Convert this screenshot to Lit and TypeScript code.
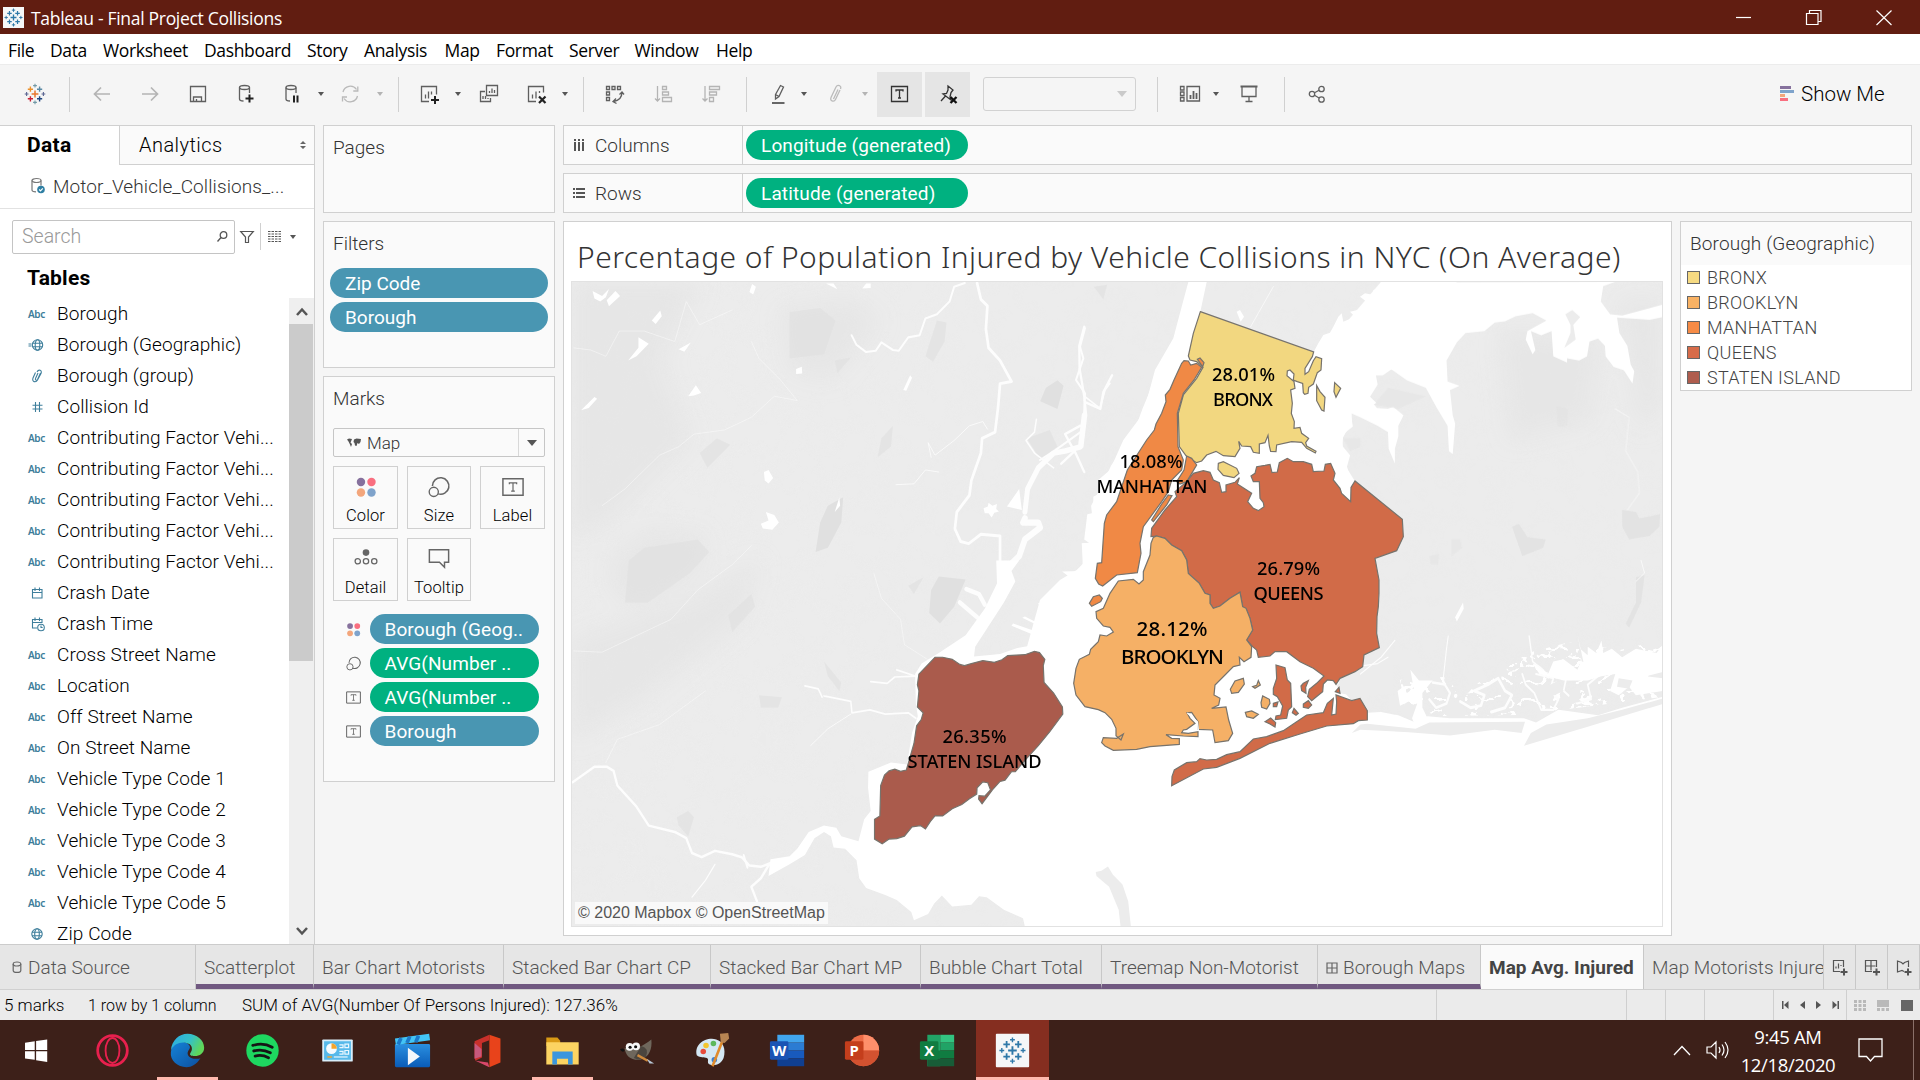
import { LitElement, html, svg, css } from "lit";
import { customElement } from "lit/decorators.js";

const spark = (c: string[]) => {
  // 9 crosses: centre, four inner, four outer
  const cross = (x: number, y: number, r: number, k: string, w: number) =>
    svg`<path d="M${x - r} ${y}H${x + r}M${x} ${y - r}V${y + r}" stroke=${k} stroke-width=${w}/>`;
  return svg`${cross(12, 12, 3.4, c[0], 1.5)}${cross(7.4, 7.2, 2.6, c[1], 1.4)}${cross(16.6, 7.2, 2.6, c[2], 1.4)}
    ${cross(7.4, 16.8, 2.6, c[3], 1.4)}${cross(16.6, 16.8, 2.6, c[4], 1.4)}${cross(12, 3.6, 1.9, c[5], 1.1)}
    ${cross(12, 20.4, 1.9, c[5], 1.1)}${cross(3.6, 12, 1.9, c[6], 1.1)}${cross(20.4, 12, 1.9, c[6], 1.1)}`;
};
const blueSpark = spark(Array(7).fill("#2f78a8"));

const toolIcons: Record<string, unknown> = {
  logo: spark(["#e8762c", "#eb912c", "#5b8aa5", "#c72035", "#1f457e", "#7199a6", "#5c6692"]),
  back: svg`<path d="M20 12H4.500M11 5.500 4.500 12l6.500 6.500" stroke="#b4b4b4" stroke-width="1.700"/>`,
  fwd: svg`<path d="M4 12h15.500M13 5.500 19.500 12 13 18.500" stroke="#b4b4b4" stroke-width="1.700"/>`,
  save: svg`<path d="M4.500 4.500h15v15h-15zM7.500 19v-4h8v4M10.500 19v-2"/>`,
  dbadd: svg`<ellipse cx="10.500" cy="5.500" rx="5" ry="2"/><path d="M5.500 5.500v11.500c0 1.500 2 2 4 2M15.500 5.500v5.500"/><path d="M15.500 12.500v8M11.500 16.500h8" stroke="#222" stroke-width="2"/>`,
  dbpause: svg`<ellipse cx="11" cy="5.500" rx="5" ry="2"/><path d="M6 5.500v11.500c0 1.500 2 2 4 2M16 5.500v5.500"/><path d="M14 13.500v7M17.500 13.500v7" stroke="#222" stroke-width="2"/>`,
  refresh: svg`<path d="M5 10a7.500 7.500 0 0 1 13.500-2.500M19.500 14a7.500 7.500 0 0 1-13.500 2.500M19.800 4.500v4.500h-4.500M4.500 19.500V15h4.500" stroke="#b9b9b9"/>`,
  sheet: svg`<path d="M11 19.500H3.500v-15h15v8M7.500 16.500v-4M10.500 16.500v-7M13.500 12.500v-3"/><path d="M17 14v8M13 18h8" stroke="#222" stroke-width="2"/>`,
  dup: svg`<path d="M9.500 3.500h11v10h-11zM8 9.500H3.500v10h10V16M12.500 11V9M15 11V6.500M17.500 11V8M6 17v-3M8.500 17v-3M11 17v-1"/>`,
  clear: svg`<path d="M11 19.500H3.500v-15h15v6M7.500 16.500v-4M11 16.500v-7M14.500 11v-2"/><path d="m14 14.500 6.500 6.500m0-6.500L14 21" stroke="#222" stroke-width="2.200"/>`,
  swap: svg`<path d="M3.500 4.500h3v3h-3zM9 4.500h3v3H9zM14.500 4.500h3v3h-3zM3.500 10h3v3h-3zM3.500 15.500h3v3h-3zM19 10c0 5-2 8.500-8.500 9.500M16.500 12.500l2.500-2.500 2 2.500M13 16.500l-3 3 3.500 2"/>`,
  asc: svg`<path d="M5.500 4v15M3 16.500 5.500 19 8 16.500M10.500 4.500h4v3h-4zM10.500 10h6v3h-6zM10.500 15.500h9v4h-9z" stroke="#b4b4b4"/>`,
  desc: svg`<path d="M5 4v15M2.500 16.500 5 19l2.500-2.500M9.500 4.500h10v3h-10zM9.500 10h7v3h-7zM9.500 15.500h4v4h-4z" stroke="#b4b4b4"/>`,
  pen: svg`<path d="M9.500 12.500 14.500 3.500l3 1.500-4.500 9.500-3.500 2.500zM9.500 12.500l3.500 2"/><path d="M6 21h12.500" stroke="#666" stroke-width="2"/>`,
  clip: svg`<path d="M16 8 11.500 17.500c-1.500 3-6 1.500-4.500-2L12 5c1.500-3 6-1.500 4.500 2M14 7.500l-4.500 9.500" stroke="#bbb"/>`,
  label: svg`<path d="M3.500 4.500h16v15h-16z" stroke="#333" stroke-width="1.300"/><path d="M8 9.500V8h7v1.500M11.500 8v8M10 16h3" stroke="#333"/>`,
  pin: svg`<path d="M12 4 17 8l-2 2.500-1 4.500 1 3-8-6 3.500-.500L12 8zM9.500 14 5 19" stroke="#333"/><path d="m14.500 15 6 6m0-6-6 6" stroke="#111" stroke-width="2.300"/>`,
  fit: svg`<path d="M2.500 4.500h3.500v3.500H2.500zM2.500 10h3.500v3.500H2.500zM2.500 15.500h3.500v3.500H2.500zM9 4.500h12.500v14.500H9z"/><path d="M12.500 17v-4M15.500 17V9M18.500 17v-6" stroke-width="1.800"/>`,
  present: svg`<path d="M3.500 4.500h17" stroke-width="2"/><path d="M5 5v9.500h14V5M12 14.500v5M8.500 19.500h7"/>`,
  share: svg`<circle cx="7" cy="12" r="2.700"/><circle cx="16.500" cy="7" r="2.700"/><circle cx="16.500" cy="17.500" r="2.700"/><path d="m9.500 10.800 4.600-2.500M9.500 13.300l4.600 2.700"/>`,
};

type Tool = { k: string; gap: number; off?: boolean };
const t = (k: string, gap: number, off = false): Tool => ({ k, gap, off });
const tools: Tool[] = [
  t("logo", 22.5), t("sep", 22.5), t("back", 20), t("fwd", 24), t("save", 24), t("dbadd", 24), t("dbpause", 22),
  t("caret", 13), t("refresh", 13), t("caret", 14, true), t("sep", 14), t("sheet", 19), t("caret", 12),
  t("dup", 15), t("clear", 24), t("caret", 12), t("sep", 14), t("swap", 19), t("asc", 25), t("desc", 24),
  t("sep", 22), t("pen", 19), t("caret", 10), t("clip", 16), t("caret", 13, true), t("label", 8), t("pin", 3),
  t("combo", 13), t("sep", 21), t("fit", 20), t("caret", 10), t("present", 17), t("sep", 23), t("share", 20),
];

const fieldIcons: Record<string, unknown> = {
  globe: svg`<circle cx="8" cy="8" r="5.200"/><ellipse cx="8" cy="8" rx="2.300" ry="5.200"/><path d="M3 6.300h10M3 9.700h10"/>`,
  geo: svg`<g transform="translate(.5 0)"><circle cx="8" cy="8" r="5.200"/><ellipse cx="8" cy="8" rx="2.300" ry="5.200"/><path d="M3 6.300h10M3 9.700h10M-1 7h3M-1 9h3"/></g>`,
  clip: svg`<path d="M11.500 5 8.500 11.500c-1 2-2.500 0-2-1L9 5M6.500 4.500 4 10c-1.500 4 3 5 4.500 2l3.500-6.500c1.500-3.500-2.500-4.500-4-1.500"/>`,
  num: svg`<path d="M6.500 3v10M10.500 3v10M3.500 6.200h10M3.500 10h10"/>`,
  date: svg`<path d="M3.500 4.500h9.500v8.500H3.500zM3.500 7.500H13M6 2.500V6M10.500 2.500V6"/>`,
  time: svg`<path d="M8 12H3.500V3.500H13V7M3.500 6.500H13M6 1.500V5M10.500 1.500V5"/><circle cx="12" cy="11.500" r="3.300"/><path d="M12 9.500v2h1.700"/>`,
};
const fields: [string, string][] = [
  ["abc", "Borough"], ["geo", "Borough (Geographic)"], ["clip", "Borough (group)"], ["num", "Collision Id"],
  ["abc", "Contributing Factor Vehi..."], ["abc", "Contributing Factor Vehi..."], ["abc", "Contributing Factor Vehi..."],
  ["abc", "Contributing Factor Vehi..."], ["abc", "Contributing Factor Vehi..."],
  ["date", "Crash Date"], ["time", "Crash Time"], ["abc", "Cross Street Name"], ["abc", "Location"],
  ["abc", "Off Street Name"], ["abc", "On Street Name"], ["abc", "Vehicle Type Code 1"], ["abc", "Vehicle Type Code 2"],
  ["abc", "Vehicle Type Code 3"], ["abc", "Vehicle Type Code 4"], ["abc", "Vehicle Type Code 5"], ["globe", "Zip Code"],
];

const markIcons: Record<string, unknown> = {
  color: svg`<g stroke="none"><circle cx="6.500" cy="6.500" r="4.600" fill="#86719d"/><circle cx="18" cy="6.500" r="4.600" fill="#f96f80"/><circle cx="6.500" cy="18" r="4.600" fill="#f3a67c"/><circle cx="18" cy="18" r="4.600" fill="#7fa3cb"/></g>`,
  size: svg`<path d="M4.800 11A9 9 0 1 1 11 19.500" stroke-width="1.700"/><circle cx="6.300" cy="17.300" r="5" stroke-width="1.500"/>`,
  label: svg`<path d="M1 3h22v18H1z" stroke-width="1.600"/><path d="M8 9V7.500h8V9M12 7.500v9M10 16.500h4" stroke-width="1.300"/>`,
  detail: svg`<circle cx="12" cy="5" r="3.600" fill="#666" stroke="none"/><circle cx="3" cy="14.500" r="2.900"/><circle cx="12" cy="14.500" r="2.900"/><circle cx="21" cy="14.500" r="2.900"/>`,
  tip: svg`<path d="M1.500 2h21v13.500H18V21l-5.500-5.500h-11z" stroke-width="1.600"/>`,
};

const sheets: { n: string; cls: string; icon?: string }[] = [
  { n: "Scatterplot", cls: "u w1" }, { n: "Bar Chart Motorists", cls: "u w2" }, { n: "Stacked Bar Chart CP", cls: "u w3" },
  { n: "Stacked Bar Chart MP", cls: "u w4" }, { n: "Bubble Chart Total", cls: "u w5" }, { n: "Treemap Non-Motorist", cls: "u w6" },
  { n: "Borough Maps", cls: "u w7", icon: "grid" }, { n: "Map Avg. Injured", cls: "on w8" }, { n: "Map Motorists Injure", cls: "w9" },
];

const legend: [string, string][] = [
  ["BRONX", "#f6da82"], ["BROOKLYN", "#f9b264"], ["MANHATTAN", "#f68b46"], ["QUEENS", "#d76c4a"], ["STATEN ISLAND", "#af5d4e"],
];

const taskIcons: unknown[] = [
  svg`<path fill="#fff" d="M6.500 11.500 17 10v9.500H6.500zM18.500 9.800 30.500 8v11.500h-12zM6.500 20.800H17V30L6.500 28.600zM18.500 20.800h12V32.500l-12-2z"/>`,
  svg`<g fill="none" stroke="#e8204e"><ellipse cx="20" cy="20" rx="16" ry="16" stroke-width="3"/><ellipse cx="20" cy="20" rx="7.500" ry="13.500" stroke-width="2"/></g>`,
  svg`<defs><linearGradient id="e1" x1="0" y1="0" x2="1" y2="1"><stop offset="0" stop-color="#1583d8"/><stop offset="1" stop-color="#0d4f9e"/></linearGradient><linearGradient id="e2" x1="0" y1="0" x2="1" y2=".4"><stop offset="0" stop-color="#2ba9e6"/><stop offset=".6" stop-color="#35c1c6"/><stop offset="1" stop-color="#5fd65a"/></linearGradient></defs>
    <path fill="url(#e1)" d="M2 22C3 12 12 8 19 12c5 3 4 6 2 8-3 5 2 9 8 9 3 0 4 0 5-1-4 7-10 10-15 10C9 38 1 31 2 22z"/><path fill="url(#e2)" d="M2 20C3 9 11 2 20 2c10 0 18 7 18 15 0 6-5 9-10 9-4 0-6-1-5-3 3-4 2-8-1-10C15 9 5 12 2 20z"/>`,
  svg`<circle cx="20" cy="20" r="17.500" fill="#1ed760"/><path d="M9.500 14.500q11.500-3.500 21 2M10.500 20.500q9.500-2.500 18 2M12 26q7.500-2 14.500 1.800" fill="none" stroke="#151515" stroke-width="3" stroke-linecap="round"/>`,
  svg`<rect x="3.500" y="8" width="33" height="24" rx="1" fill="#d9eefa"/><rect x="5.500" y="10" width="29" height="20" fill="#57b9ea"/><circle cx="13.500" cy="18" r="5.800" fill="#f6fbff"/><path d="M13.500 18v-5.800a5.800 5.800 0 0 1 5.800 5.800z" fill="#f6a52c"/><path d="M22 14h4v3h-4M28 13h4v4h-4zM22 21h4v3h-4M28 20h4v4h-4z" fill="none" stroke="#eaf7ff" stroke-width="1.300"/><path d="M9 27h5" stroke="#f6a52c" stroke-width="1.500"/><path d="M16 27h15" stroke="#d5effc" stroke-width="1.500"/>`,
  svg`<defs><linearGradient id="mv" x1="0" y1="0" x2="0" y2="1"><stop offset="0" stop-color="#2a8fe0"/><stop offset="1" stop-color="#0a5cb8"/></linearGradient></defs><rect x="1" y="13" width="38" height="25" rx="1.500" fill="url(#mv)"/><path d="M1 7 38 2l1 7L2 14z" fill="#43c4f5"/><path d="m7.500 6.500-3 7M17 5l-3 7M26.500 4l-3 7" stroke="#1b78c9" stroke-width="4"/><path d="m15 17 13 9.500L15 36z" fill="#f4f7fa"/>`,
  svg`<path d="M22 3l12 4v26l-12 5z" fill="#e8431b"/><path d="M6 10 22 3v6l-8 3v15.500L7 31l-1-3z" fill="#c9302b"/><path d="M7 31l13.500 2 1.500 5z" fill="#d9486b"/><path d="M6 12v17l7.500-2.500v-8z" fill="#c8587c"/>`,
  svg`<path d="M2.500 6h12l3 3.500V15h-15z" fill="#d99a15"/><path d="M2.500 11h35v24h-35z" fill="#fcd462"/><path d="M9 21h22v14h-5v-6h-12v6H9z" fill="#3b96dd"/>`,
  svg`<path d="M6 17c5 2 14 3 29-9 1 10-2 19-12 22-10 1-16-4-17-13z" fill="#6f675c"/><path d="M24 15q9 2 5 12-5 5-13 1z" fill="#4b453e"/><circle cx="11.500" cy="16" r="4.200" fill="#f7f7f7"/><circle cx="18.500" cy="15.500" r="4.200" fill="#f7f7f7"/><circle cx="12" cy="16.500" r="1.700" fill="#111"/><circle cx="18" cy="16" r="1.700" fill="#111"/><path d="M1 19q4-3 5 1-2 3-5-1z" fill="#111"/><path d="m20 25 11 6" stroke="#d08a3c" stroke-width="2.500"/><path d="m30 29 8 5-5 0z" fill="#b9c7d6"/>`,
  svg`<path d="M3 25C0 14 12 5 24 8c7 2 11 10 8 20-3 7-10 9-15 7-4-2 0-5-3-7-3-1-7 0-11-3z" fill="#d5e8f4"/><circle cx="10" cy="21" r="3" fill="#e74c3c"/><circle cx="13" cy="14.500" r="3" fill="#f3c52f"/><circle cx="21" cy="12.500" r="3" fill="#5cb85c"/><circle cx="22" cy="30" r="3" fill="#3d7fd0"/><path d="M20 37 31 9" stroke="#e08b2d" stroke-width="2.800"/><path d="m29 11-1-9 9-1 1 6-5 5z" fill="#b78452"/>`,
  svg`<rect x="9" y="3" width="29" height="8.500" fill="#41a5ee"/><rect x="9" y="11.500" width="29" height="8.500" fill="#2b7cd3"/><rect x="9" y="20" width="29" height="8.500" fill="#185abd"/><rect x="9" y="28.500" width="29" height="8.500" fill="#103f91"/><rect x="1" y="10" width="20" height="20" rx="1.500" fill="#1a54b4"/><text x="11" y="26" class="off">W</text>`,
  svg`<circle cx="21" cy="20" r="17" fill="#ed6c47"/><path d="M21 3a17 17 0 0 1 17 17H21z" fill="#ff8f6b"/><path d="M4 20h34a17 17 0 0 1-34 0z" fill="#d35230"/><rect x="1" y="10" width="20" height="20" rx="1.500" fill="#c43e1c"/><text x="11" y="26" class="off">P</text>`,
  svg`<rect x="9" y="3" width="14" height="34" fill="#21a366"/><rect x="23" y="3" width="15" height="8.500" fill="#33c481"/><rect x="23" y="11.500" width="15" height="8.500" fill="#21a366"/><rect x="9" y="20" width="29" height="8.500" fill="#107c41"/><rect x="9" y="28.500" width="29" height="8.500" fill="#185c37"/><rect x="1" y="10" width="20" height="20" rx="1.500" fill="#107c41"/><text x="11" y="26" class="off">X</text>`,
  svg`<rect x="2" y="2" width="36" height="36" rx="1" fill="#f5f6f7"/><g fill="none" transform="translate(3.500 3.500) scale(1.370)">${blueSpark}</g>`,
];

@customElement("borough-map")
class BoroughMap extends LitElement {
  static styles = css`
    :host { display: block; }
    svg { display: block; width: 100%; height: 100%; }
    .b { stroke: #77736c; stroke-width: 1.2; vector-effect: non-scaling-stroke; }
    .w { fill: #fff; }
    .l { fill: #ececec; }
    .r { fill: none; stroke: #fdfdfd; stroke-linejoin: round; stroke-linecap: round; }
    .h { fill: #e2e2e2; opacity: .6; }
    .d { fill: #e0e0e0; }
    .t { font-family: "Noto Sans", "Open Sans", sans-serif; font-weight: 500; font-size: 18.300px; text-anchor: middle; fill: #000; }
    .big { font-size: 20.500px; }
  `;
  render() {
    const bx = "#f2d780", bk = "#f5b066", mh = "#f08945", qn = "#d16b48", si = "#aa5b4c";
    const p = (f: string, pts: string) => svg`<polygon class="b" fill=${f} points=${pts}/>`;
    const w = (pts: string) => svg`<polygon class="w" points=${pts}/>`;
    const r = (width: number, pts: string) => svg`<polyline class="r" stroke-width=${width} points=${pts}/>`;
    const d = (pts: string) => svg`<polygon class="d" points=${pts}/>`;
    const lab = (x: number, y: number, len: number, s: string, c = "t") =>
      svg`<text class=${c} x=${x} y=${y} textLength=${len}>${s}</text>`;
    return html`<svg viewBox="572 282 1090 644" preserveAspectRatio="none">
      <defs>
        <filter id="n" x="0" y="0" width="1" height="1">
          <feTurbulence type="fractalNoise" baseFrequency=".045" numOctaves="4" seed="7"/>
          <feColorMatrix values="0 0 0 0 .84  0 0 0 0 .84  0 0 0 0 .84  3.2 0 0 0 -1.45"/>
        </filter>
        <filter id="k" x="0" y="0" width="1" height="1">
          <feTurbulence type="turbulence" baseFrequency=".045 .06" numOctaves="3" seed="12"/>
          <feColorMatrix values="0 0 0 0 1  0 0 0 0 1  0 0 0 0 1  -28 0 0 0 4.200"/>
        </filter>
        <filter id="s" x="-.2" y="-.2" width="1.4" height="1.4"><feGaussianBlur stdDeviation="11"/></filter>
        <linearGradient id="f"><stop offset="0" stop-color="#fff"/><stop offset=".3" stop-color="#fff" stop-opacity=".7"/><stop offset=".5" stop-color="#fff" stop-opacity=".12"/><stop offset=".7" stop-color="#fff" stop-opacity=".15"/><stop offset="1" stop-color="#fff" stop-opacity=".4"/></linearGradient>
        <mask id="m"><rect x="572" y="282" width="1090" height="644" fill="url(#f)"/></mask>
        <clipPath id="marsh"><polygon points="1400,680 1425,668 1450,680 1460,700 1490,672 1520,655 1570,642 1620,650 1662,640 1662,697 1600,705 1520,715 1440,716 1405,706"/></clipPath>
      </defs>
      <rect class="l" x="572" y="282" width="1090" height="644"/>
      <g mask="url(#m)"><rect x="572" y="282" width="1090" height="644" filter="url(#n)" opacity=".6"/></g>
      <g filter="url(#s)">
        <polygon class="h" points="572,282 700,282 660,360 690,440 610,520 572,540"/>
        <polygon class="h" points="610,560 650,530 705,535 700,570 640,605 612,590"/>
        <polygon class="h" points="572,640 690,600 760,560 740,620 640,700 572,740"/>
        <polygon class="h" points="780,310 850,300 880,320 830,380 790,370"/>
        <polygon class="h" points="1500,330 1600,340 1590,420 1510,440"/>
        <polygon class="h" points="1620,300 1662,300 1662,400 1640,430"/>
      </g>
      <g transform="translate(560 270) scale(.38265 .42092)">
        ${d("990,728 1060,735 1030,800 993,840 965,815 970,760")}${d("1300,262 1316,275 1300,330 1255,312 1270,280")}
        ${d("700,560 740,540 735,600 700,660 668,670 680,600")}
        <g opacity=".6">${d("985,120 1010,125 1005,170 975,218 955,205")}${d("365,435 410,400 445,415 385,470")}${d("718,215 760,208 725,245")}${d("840,400 870,370 865,420 830,445")}
        ${d("600,100 680,90 720,120 690,200 600,210")}${d("305,1300 335,1285 350,1300 335,1345 310,1320")}${d("910,750 950,730 925,770")}
        ${d("1395,40 1430,35 1420,70")}${d("1220,400 1280,380 1300,420 1255,450")}${d("520,1010 580,1015 570,1040 525,1040")}${d("690,930 735,980 730,1000 700,965")}
        ${d("180,690 220,660 360,640 390,670 340,720 230,790 170,790")}${d("440,820 500,770 510,800 450,860")}</g>
        ${w("85,50 110,62 128,45 120,65 105,75 90,68")}${w("122,72 145,50 157,62 128,86")}${w("240,120 262,96 266,110 250,128")}${w("178,215 205,185 205,160 232,175 200,205")}
        ${w("310,188 342,172 325,194")}${w("335,300 355,274 369,292 350,298")}${w("55,333 90,302 97,306 75,328")}${w("495,52 502,33 512,40 505,58")}
        ${w("533,480 545,475 557,494 545,507 535,500")}${w("525,603 545,595 538,575 560,582 572,600 555,617 530,614")}${w("617,235 632,230 633,246 617,247")}${w("718,575 730,540 732,560")}
        ${w("897,285 915,250 920,256 905,287")}${w("695,32 715,32 725,46")}${w("790,44 800,32 812,32 812,43")}${w("1168,562 1200,520 1207,570")}
        ${w("1107,566 1118,562 1120,553 1130,560 1142,556 1140,568 1147,574 1135,577 1128,588 1120,578 1110,578")}
        ${r(5, "1058,31 1030,40 1018,75 985,105 955,115 940,155 910,160 885,192 870,190 840,172 825,192 800,195 775,178 762,155")}
        ${r(7, "1090,31 1100,70 1117,85 1113,140 1120,185 1150,215 1180,265 1150,270 1145,325 1137,385 1103,400 1100,435 1075,500 1070,535 1037,575 1032,615 1047,645 1068,650 1100,628 1150,632 1150,690")}
        ${r(6, "1370,135 1357,180 1358,235 1370,300 1375,345 1365,420")}${r(6, "1375,315 1412,330 1420,290 1443,250")}
        ${r(13, "1370,345 1360,420 1320,430 1290,435 1250,470 1222,520 1215,575")}${r(15, "1215,590 1210,600 1250,600 1255,612 1215,640 1200,680 1165,710")}
        ${r(4, "1245,355 1240,385 1218,405 1240,435 1290,470")}${r(6, "1310,460 1345,430 1370,480 1350,440 1320,390 1360,370")}
        ${r(2, "970,445 962,410 980,440 1030,405 1070,370 1105,360 1117,378")}${r(2, "878,510 925,508 955,475 990,480")}
        ${r(6, "33,1217 90,1180 122,1180 140,1190 150,1225 200,1275 232,1320 300,1335 330,1350 345,1385 370,1395 405,1380 450,1388 475,1395 495,1415 525,1418 548,1410")}
        ${r(6, "548,1410 525,1445 500,1465 515,1500")}${r(5, "480,1390 490,1420")}${r(3, "405,1412 380,1450 345,1490")}
        ${r(4, "640,988 675,995 685,1015")}${r(4, "690,1012 735,1020 760,1025 763,1052 810,1045 850,1055 910,1052 930,1065")}
        ${r(4, "812,978 855,982 875,967 930,965 880,950")}${r(2, "760,1055 700,1090 655,1130")}
        <g opacity=".6">${r(2, "36,185 80,190 120,205 155,145 220,145 300,170 330,75 365,130 450,95")}${r(2, "110,560 170,520 260,440 310,420 350,390 430,380 500,350 560,300 620,310 575,260 520,210 500,170")}
        ${r(2, "36,905 110,908 220,860 290,830 360,760 450,700 500,655")}${r(2, "820,720 840,780 890,830 900,890 960,925")}${r(2, "120,1170 150,1115 260,1080 380,1000")}</g>
        ${r(11, "1062,758 1095,770 1110,795")}${r(11, "1045,790 1090,825")}
        ${w("1140,690 1200,690 1180,715 1190,740 1160,790 1110,860 1085,895 1082,918 1150,912 1195,898 1225,893 1232,865 1180,845 1184,840 1235,856 1270,868 1262,850 1208,826 1215,823 1280,853 1280,838 1248,822 1270,820 1248,790 1262,798 1285,795 1278,762 1315,775 1300,752 1345,738 1312,716 1366,715 1365,650 1385,650 1370,640 1378,580 1390,578 1388,560 1420,505 1440,465 1500,385 1522,330 1568,230 1568,1560 1215,1560 1210,1540 1160,1520 1115,1490 1095,1488 1075,1508 1025,1512 998,1486 978,1505 962,1530 925,1545 918,1525 880,1497 850,1485 800,1468 782,1445 775,1402 745,1375 715,1372 708,1345 690,1335 665,1350 640,1390 600,1412 545,1440 550,1400 600,1393 620,1375 650,1335 690,1320 722,1325 735,1345 780,1357 795,1305 812,1285 805,1230 806,1192 865,1170 907,1175 920,1100 935,1060 930,1030 928,960 945,935 990,910 1060,868 1110,805 1142,745")}
        <polygon class="l" points="1400,1430 1415,1427 1432,1417 1445,1437 1470,1460 1485,1500 1492,1560 1465,1560 1460,1520 1435,1465 1402,1440"/>
      </g>
      <g transform="translate(1040 280) scale(.33333)">
        ${w("445,6 500,6 481,95 470,200 560,210 821,216 835,190 850,165 870,158 880,140 895,110 905,100 910,125 945,110 930,95 975,85 980,65 960,50 975,40 1000,45 1000,30 1020,25 1022,6 1250,6 1180,318 1110,285 1052,268 1030,283 1000,285 1010,310 985,345 1010,370 935,398 935,425 905,480 915,540 930,590 945,603 1087,718 1000,835 1010,1100 972,1125 968,1160 900,1195 895,1215 935,1262 960,1255 985,1290 982,1325 1200,1340 1200,1500 -150,1500 0,960 60,900 110,870 130,850 125,790 150,788 145,710 160,700 160,650 180,640 175,600 210,570 250,480 310,400 345,270 400,175 425,80")}
        ${r(6, "135,145 120,200 130,235 108,300 135,340 130,450 40,515 0,540")}${r(5, "135,350 180,385 195,330 210,310")}${r(2, "700,20 632,140")}
        ${w("590,95 600,90 612,110 602,125")}
        <polygon class="l" points="850,215 862,212 860,222 848,224"/><polygon class="l" points="880,180 895,185 890,200"/>
        <polygon class="l" points="925,1130 968,1135 1000,1125 1060,1090 1060,1240 960,1250 900,1240 890,1215 930,1190"/>
      </g>
      <g transform="translate(1140 270) scale(.34439 .42092)">
        ${w("698,30 1380,28 1345,38 1338,75 1365,105 1400,108 1460,95 1518,82 1518,112 1480,118 1385,113 1392,150 1415,180 1425,225 1435,240 1430,270 1405,238 1375,230 1352,205 1350,180 1330,163 1305,170 1298,205 1275,215 1240,210 1240,220 1200,205 1195,145 1165,155 1135,145 1148,190 1140,200 1120,165 1125,145 1180,120 1140,102 1090,110 1060,122 1030,125 1000,145 945,150 920,172 890,215 893,265 928,275 900,285 908,345 915,365 908,437 897,430 893,370 860,325 830,280 775,262 730,236 705,250 685,250 690,272 665,305 688,328 720,330 735,325 765,345 750,370 750,395 740,425 740,460 722,425 720,385 690,370 640,350 612,340 618,372 590,390 588,418 610,440 600,470 625,503 612,550 450,470 520,200")}
        <polygon class="l" points="1235,105 1255,95 1278,112 1258,130 1265,165 1232,185 1250,150 1250,130"/>
        <g opacity=".7">${d("1080,610 1100,603 1125,635 1178,640 1170,660 1110,680")}${d("1400,570 1440,575 1450,590 1510,580 1508,610 1480,632 1420,640 1400,610")}${d("1440,730 1465,725 1455,790 1420,850 1410,840 1440,790")}</g>
        <g opacity=".4">${d("1210,325 1242,330 1240,370 1213,372")}${d("905,640 930,640 935,660 905,680")}${d("680,320 720,280 830,300 750,330")}${d("590,400 640,400 640,420 610,430")}${d("840,680 868,675 865,700 845,700")}</g>
        ${w("915,825 938,790 940,805 920,835")}
        ${w("660,1052 700,1050 750,1058 800,1075 835,1060 900,1065 1115,1065 1150,1075 1215,1045 1330,1058 1400,1040 1518,1014 1518,1560 0,1560 0,1200 600,1080")}
        <polygon class="l" points="660,1078 800,1090 840,1075 1118,1073 1108,1100 1030,1092 900,1106 780,1098 640,1092 615,1100 640,1080"/>
        <polygon class="l" points="1115,1130 1135,1100 1180,1080 1300,1065 1400,1045 1518,1018 1518,1031 1300,1085"/>
      </g>
      <g clip-path="url(#marsh)"><rect x="1395" y="630" width="267" height="90" filter="url(#k)"/></g>
      <g transform="translate(1140 270) scale(.34439 .42092)">
        ${w("748,1000 765,990 775,1005 795,995 785,950 810,975 850,975 840,985 820,1005 820,1040 835,1065 800,1085 790,1065 805,1030 780,1025 755,1035")}
        ${r(6, "850,980 885,985 900,1005 890,1030 860,1040 840,1020")}${r(7, "930,1025 960,1040 990,1035 1000,1010 970,1000 1010,985 1040,970 1060,1000 1080,1010 1060,1040 1020,1050")}
        ${r(5, "1110,960 1120,985 1145,1005 1165,1045 1200,1045 1215,1020 1190,1000 1200,970 1150,960")}${r(5, "1240,960 1230,1000 1270,1030 1310,1020 1300,985 1330,965")}
        ${w("1140,935 1160,940 1185,960 1200,930 1230,925 1270,950 1280,930 1330,935 1370,900 1400,920 1440,900 1500,910 1518,890 1518,955 1470,965 1518,970 1518,1000 1440,1010 1420,990 1390,1010 1365,1000 1380,960 1340,965 1300,975 1230,975 1160,960")}
        ${w("1270,865 1278,900 1300,915 1300,895 1325,910 1340,880 1345,910 1370,900 1350,935 1290,940")}
        ${r(3, "640,960 700,920 740,880")}${r(3, "650,940 690,935 720,920")}${r(3, "880,975 890,900 895,870")}${r(4, "1130,870 1140,930 1170,950")}${r(2, "1455,690 1465,720 1440,740")}
        <g opacity=".5">${r(3, "1380,330 1420,350 1410,430 1445,480 1450,530 1415,570")}</g>
        <g class="l"><polygon points="1180,990 1215,975 1230,1000 1190,1015"/><polygon points="1250,1000 1280,990 1275,1025 1240,1035"/><polygon points="1390,970 1430,975 1420,995 1385,990"/></g>
      </g>
      <g transform="translate(560 270) scale(.38265 .42092)">
        ${p(si, "938,960 980,920 1000,920 1025,925 1045,937 1057,940 1075,935 1105,928 1135,932 1155,926 1170,916 1215,914 1240,906 1253,909 1267,925 1263,940 1265,980 1290,1005 1313,1038 1314,1055 1280,1097 1250,1130 1215,1165 1190,1192 1180,1192 1163,1212 1150,1215 1130,1235 1103,1268 1094,1257 1095,1249 1110,1250 1125,1235 1118,1218 1105,1216 1090,1230 1089,1245 1070,1256 1050,1270 1025,1280 1000,1297 980,1297 968,1310 955,1328 942,1320 920,1323 900,1345 880,1351 860,1352 842,1363 822,1352 822,1305 836,1297 838,1225 848,1200 860,1190 875,1186 890,1191 905,1188 917,1150 925,1125 932,1083 944,1068 949,1052 934,1038 938,1000 934,985")}
      </g>
      <g transform="translate(1040 280) scale(.33333)">
        ${p(qn, "333,770 335,745 375,690 410,650 405,635 440,605 460,580 490,572 510,577 520,600 538,608 545,637 558,635 558,615 585,607 598,593 592,612 635,640 623,665 640,685 655,692 672,680 670,668 660,655 658,605 640,605 633,588 645,580 650,560 675,556 690,553 696,578 712,576 718,548 742,535 760,545 790,545 815,553 820,575 852,573 856,553 872,550 885,580 880,600 900,625 905,640 932,665 933,622 945,603 1087,718 1090,770 1070,812 1005,835 1017,900 1017,940 1015,980 1011,1010 1010,1060 1018,1103 972,1125 968,1160 945,1175 900,1195 888,1213 880,1202 862,1200 850,1212 848,1235 832,1248 815,1262 803,1250 808,1228 830,1210 852,1188 820,1165 780,1145 740,1115 705,1115 690,1128 655,1132 650,1110 638,1100 620,1080 638,1050 630,1015 618,985 608,980 600,937 570,955 540,978 520,985 510,970 510,945 495,940 478,910 445,880 440,840 425,812 395,795 375,775 350,768")}
        ${p(bk, "350,768 375,775 395,795 425,812 440,840 445,880 478,910 495,940 510,945 510,970 520,985 540,978 570,955 600,937 608,980 618,985 630,1015 638,1050 620,1080 635,1100 633,1132 612,1145 598,1132 600,1155 580,1160 555,1185 525,1215 522,1245 540,1255 536,1275 515,1285 558,1281 566,1320 578,1360 565,1382 525,1388 518,1350 475,1348 474,1325 455,1297 441,1298 450,1315 465,1330 440,1348 430,1350 425,1358 445,1360 474,1355 474,1370 430,1368 378,1364 395,1375 418,1376 418,1393 330,1400 290,1408 220,1411 195,1398 185,1388 190,1373 230,1375 250,1362 243,1380 228,1367 228,1345 215,1318 195,1298 175,1289 135,1280 108,1245 101,1210 108,1165 118,1138 148,1123 152,1108 165,1095 175,1085 180,1065 200,1068 220,1056 210,1042 190,1038 170,1015 168,995 190,985 210,940 235,903 280,898 297,912 310,900 310,875 330,825 333,790 340,772")}
        ${p(bx, "481,95 821,216 817,230 795,265 795,283 806,275 820,242 828,230 845,236 843,270 832,278 820,312 806,322 804,340 794,343 790,338 788,310 772,305 760,300 762,282 750,270 742,273 741,287 762,305 765,325 752,330 757,370 754,400 763,425 762,445 780,442 785,460 806,475 797,488 800,498 828,514 826,519 800,505 785,487 755,485 710,495 708,515 692,514 688,498 684,466 675,488 658,492 658,520 640,517 632,500 605,498 596,484 600,505 585,530 550,527 528,514 500,525 485,543 470,548 440,530 418,500 415,400 430,345 470,295 489,262 470,245 450,240 445,228 460,160")}
        ${p(bx, "830,317 840,335 855,352 852,393 845,390 830,362")}${p(bx, "884,308 902,325 888,352 882,335")}${p(bx, "535,550 550,545 590,565 597,580 582,593 550,586 534,568")}
        ${p(mh, "425,250 432,242 445,243 452,255 470,250 485,262 462,300 430,340 412,400 414,500 430,540 425,570 395,600 385,635 365,665 310,740 300,790 303,820 292,878 230,885 188,918 176,912 166,895 172,850 185,848 193,730 200,705 230,665 262,570 320,480 343,450 348,432 365,400 378,365 376,345 390,328 402,300")}
        ${p(mh, "472,238 480,234 492,248 488,260")}${p(mh, "440,528 455,535 470,555 440,605 420,612 410,605 432,570")}${p(mh, "385,645 396,647 380,675 340,725 335,720 365,672")}${p(mh, "148,970 160,950 178,945 187,955 182,965 155,979")}
        ${p(qn, "395,1517 396,1490 403,1470 440,1448 470,1445 480,1436 500,1440 530,1438 560,1424 600,1415 640,1377 680,1370 730,1352 770,1325 800,1305 850,1298 862,1270 880,1255 875,1305 888,1302 890,1265 888,1245 935,1262 960,1255 982,1292 982,1320 955,1322 940,1331 860,1338 780,1362 690,1390 600,1435 530,1462 490,1467")}
        ${p(qn, "708,1155 735,1163 742,1200 752,1210 755,1280 745,1290 740,1315 706,1319 708,1308 722,1305 728,1278 712,1250 700,1243 700,1225 710,1195")}
        ${p(qn, "675,1325 692,1314 707,1328 705,1341 690,1332")}${p(qn, "790,1210 805,1202 797,1222 798,1240 785,1232 783,1218")}${p(qn, "790,1272 805,1262 815,1275 805,1285 790,1282")}${p(qn, "762,1285 775,1300 768,1306 757,1298")}${p(qn, "700,1270 714,1266 710,1280 700,1280")}${p(qn, "886,1235 897,1222 900,1240")}
        ${p(bk, "571,1228 585,1203 610,1195 613,1212 595,1237 575,1240")}${p(bk, "638,1220 650,1216 655,1202 661,1215 645,1225")}${p(bk, "663,1268 668,1248 688,1258 690,1270 680,1287 665,1282")}${p(bk, "616,1297 635,1293 655,1303 640,1315 620,1310")}
        ${r(4, "443,1300 472,1325 475,1350")}
      </g>
      ${lab(1243.500, 380.500, 63, "28.01%")}${lab(1243, 405.500, 60, "BRONX")}
      ${lab(1151, 467.500, 63, "18.08%")}${lab(1152, 492.500, 111, "MANHATTAN")}
      ${lab(1288.500, 574.500, 63, "26.79%")}${lab(1288.500, 599.500, 70, "QUEENS")}
      ${lab(1172, 635.500, 71, "28.12%", "t big")}${lab(1172.500, 663.500, 103, "BROOKLYN", "t big")}
      ${lab(974.500, 742.500, 64, "26.35%")}${lab(974.500, 767.500, 134, "STATEN ISLAND")}
    </svg>`;
  }
}

@customElement("app-root")
class AppRoot extends LitElement {
  static styles = css`
    :host { display: flex; flex-direction: column; width: 1920px; height: 1080px; overflow: hidden; background: #f5f5f5; fill: none; stroke: none;
      font-family: Roboto, "Open Sans", sans-serif; font-weight: 300; font-size: 19px; color: #333; }
    * { box-sizing: border-box; }
    svg { display: block; flex: none; overflow: visible; }
    .seg { font-family: "Open Sans", "Noto Sans", sans-serif; font-weight: 400; }
    .title { height: 34px; background: #611d11; color: #fff; display: flex; align-items: center; padding-left: 3px; font-size: 17.500px; flex: none; }
    .title .ico { width: 21px; height: 21px; background: #f6f7f8; margin-right: 7px; }
    .title .name { flex: 1; letter-spacing: -.3px; padding-top: 1px; }
    .title .btns { display: flex; gap: 54px; padding-right: 28px; }
    .menu { height: 30px; background: #fff; color: #000; display: grid; align-items: center; padding: 2px 0 0 8px; font-size: 17.500px; letter-spacing: -.35px;
      grid-template-columns: 42px 53px 101px 103px 57px 80.500px 51.500px 73px 65.500px 81.500px auto; flex: none; }
    .tools { height: 61px; border-top: 1px solid #ececec; display: flex; align-items: center; padding-bottom: 2px; flex: none; }
    .tool { width: 24px; height: 24px; stroke: #5f5f5f; stroke-width: 1.300; flex: none; }
    .tool.act { width: 45px; height: 45px; background: #e5e5e5; display: flex; align-items: center; justify-content: center; }
    .caret { width: 8px; display: flex; justify-content: center; flex: none; }
    .caret i, .dn { border: 3.500px solid transparent; border-top: 4.500px solid #555; border-bottom: 0; }
    .caret.off i { border-top-color: #b4b4b4; }
    .sep { width: 1px; height: 35px; background: #d0d0d0; flex: none; }
    .sep.fs { height: 27px; margin-left: 6px; }
    .vw { margin-left: 7px; }
    .lc { margin-left: 8px; }
    .combo { width: 153px; height: 34px; border: 1px solid #d2d2d2; border-radius: 3px; display: flex; align-items: center; justify-content: flex-end; padding-right: 8px; flex: none; }
    .combo i { border: 5.500px solid transparent; border-top: 6px solid #cacaca; border-bottom: 0; }
    .show { margin-left: 451px; display: flex; align-items: center; gap: 7px; color: #000; font-size: 20.500px; white-space: nowrap; }
    .main { height: 819px; display: flex; flex: none; }
    .left { width: 315px; background: #fff; border-right: 1px solid #cfcfcf; border-top: 1px solid #d0d0d0; display: flex; flex-direction: column; }
    .ltabs { height: 39px; display: flex; font-size: 20px; color: #000; flex: none; }
    .ltabs b { width: 119px; padding-left: 27px; font-weight: 700; line-height: 38px; font-size: 21px; letter-spacing: .3px; }
    .ltabs .an { flex: 1; background: #fafafa; border-left: 1px solid #d0d0d0; border-bottom: 1px solid #d0d0d0; padding: 0 8px 0 19px; display: flex; align-items: center; justify-content: space-between; letter-spacing: .45px; }
    .ds { height: 44px; display: flex; align-items: center; padding: 0 0 1px 31px; gap: 8px; border-bottom: 1px solid #e2e2e2; flex: none; letter-spacing: .1px; }
    .find { height: 55px; display: flex; align-items: center; padding: 0 0 0 12px; flex: none; }
    .box { width: 223px; height: 34px; border: 1px solid #c4c4c4; border-radius: 2px; display: flex; align-items: center; justify-content: space-between; padding: 0 6px 1px 9px; color: #999; margin-right: 5px; font-size: 19.500px; }
    .tb { height: 34px; line-height: 29px; padding-left: 27px; font-weight: 700; font-size: 21px; letter-spacing: .2px; color: #000; flex: none; }
    .list { flex: 1; display: flex; min-height: 0; overflow: hidden; }
    .rows { flex: 1; letter-spacing: .08px; }
    .row { height: 31px; display: flex; align-items: center; color: #000; white-space: nowrap; }
    .row .fi { width: 57px; display: flex; justify-content: flex-end; padding-right: 12px; flex: none; }
    .row svg { width: 16px; height: 16px; stroke: #3f7f9c; stroke-width: 1.100; margin-right: .500px; }
    .row .abc { font: 600 10px "Noto Sans", sans-serif; color: #3d7d9a; letter-spacing: -.3px; }
    .sb { width: 25px; background: #efefef; display: flex; flex-direction: column; align-items: stretch; }
    .sb div { height: 26px; display: grid; place-items: center; }
    .sb .th { background: #cbcbcb; height: 337px; margin-right: 1px; }
    .sb .sp { flex: 1; }
    .mid { width: 232px; margin-left: 8px; display: flex; flex-direction: column; gap: 8px; }
    .card { background: #fafafa; border: 1px solid #d0d0d0; }
    .card h4 { margin: 0; font: inherit; padding: 9px 0 0 9px; height: 46px; line-height: 26px; }
    .pages { height: 88px; } .filters { height: 147px; } .marks { height: 406px; }
    .pill { height: 30px; border-radius: 15px; background: #4996b2; color: #fff; font-weight: 400; display: flex; align-items: center; padding: 0 0 0 15px; white-space: nowrap; }
    .pill.g { background: #00b180; }
    .filters .pill { margin: 0 6px 4px; }
    .sel { height: 29px; margin: 5px 9px 9px; border: 1px solid #c6c6c6; border-radius: 2px; display: flex; align-items: center; font-size: 17px; padding-left: 13px; gap: 6px; }
    .sel .m { flex: 1; }
    .sel .c { width: 26px; height: 27px; border-left: 1px solid #d8d8d8; display: grid; place-items: center; }
    .dn { border-width: 5px 5px 0; border-top-width: 6px; }
    .grid { display: grid; grid-template-columns: 65px 64px 65px; gap: 9px; padding-left: 9px; margin-bottom: 13px; }
    .mk { height: 63px; border: 1px solid #d0d0d0; display: flex; flex-direction: column; align-items: center; justify-content: space-between; padding: 9px 0 2px; color: #000; font-size: 16.500px; letter-spacing: .1px; line-height: 21px; }
    .mk svg { width: 22px; height: 22px; stroke: #666; stroke-width: 1.400; }
    .mrow { height: 30px; margin-bottom: 4px; display: flex; align-items: center; padding-left: 22px; gap: 8px; }
    .mrow svg { width: 15px; height: 15px; stroke: #666; stroke-width: 1.900; margin-right: .500px; }
    .mrow .pill { width: 169px; padding-left: 15px; letter-spacing: .1px; }
    .right { width: 1349px; margin-left: 8px; display: flex; flex-direction: column; gap: 8px; }
    .shelf { height: 40px; display: flex; flex: none; }
    .shelf .n { width: 179px; border-right: 1px solid #d0d0d0; display: flex; align-items: center; gap: 10px; padding-left: 9px; }
    .shelf .pill { width: 222px; margin: 4px 0 0 3px; letter-spacing: .15px; }
    .lower { display: flex; gap: 8px; align-items: flex-start; }
    .viz { width: 1109px; height: 715px; background: #fff; border: 1px solid #d0d0d0; padding: 0 7px; }
    .viz h1 { margin: 0; height: 59px; padding-left: 6px; font: 300 30px/70px "Noto Sans", "Open Sans", sans-serif; letter-spacing: .46px; color: #333; white-space: nowrap; }
    .map { width: 1092px; height: 646px; border: 1px solid #e2e2e2; display: grid; }
    .map > * { grid-area: 1 / 1; }
    .map borough-map { width: 1090px; height: 644px; }
    .cr { align-self: end; justify-self: start; margin: 0 0 2px 3px; background: #f9f9f9; font: 400 16px/22px "Liberation Sans", Arial, sans-serif; color: #555; padding: 0 3px; z-index: 1; }
    .leg { width: 232px; height: 170px; background: #fff; border: 1px solid #d0d0d0; }
    .leg h5 { margin: 0; font: inherit; height: 43px; line-height: 43px; background: #fafafa; padding-left: 9px; white-space: nowrap; letter-spacing: .12px; }
    .leg div { height: 25px; display: flex; align-items: center; gap: 7px; padding-left: 6px; font-size: 18px; color: #444; letter-spacing: .3px; }
    .leg i { width: 13px; height: 13px; border: 1px solid #666; }
    .tabs { height: 46px; background: #e6e6e6; border-top: 1px solid #ccc; border-bottom: 1px solid #d0d0d0; display: flex; flex: none; color: #555; }
    .tab { border-right: 1px solid #c8c8c8; display: flex; align-items: center; padding: 1px 0 0 8px; gap: 5px; white-space: nowrap; overflow: hidden; flex: none; }
    .tab.u { border-bottom: 5px solid #705880; padding-top: 6px; }
    .tab.on { background: #fafafa; font-weight: 700; color: #444; }
    .tab.w0 { width: 196px; gap: 6px; padding-left: 12px; } .w1 { width: 118px; } .w2 { width: 190px; } .w3 { width: 207px; } .w4 { width: 210px; } .w5 { width: 181px; }
    .w6 { width: 216px; } .w7 { width: 163px; } .w8 { width: 163px; } .w9 { width: 180px; }
    .new { flex: 1; border-right: 1px solid #c8c8c8; display: grid; place-items: center; }
    .new svg { stroke: #555; stroke-width: 1.200; width: 17px; height: 17px; }
    .status { height: 30px; background: #ebebeb; display: flex; flex: none; font-size: 17px; color: #000; line-height: 31px; padding-left: 4px; white-space: nowrap; }
    .status .s1 { width: 84px; } .status .s2 { width: 154px; font-size: 16px; } .status .s3 { width: 1194px; }
    .status .c { border-left: 1px solid #cfcfcf; }
    .c1 { width: 190px; } .c2 { width: 39px; } .c3 { width: 39px; } .c4 { width: 69px; } .c5 { width: 73px; } .c6 { flex: 1; }
    .c5, .c6 { display: flex; align-items: center; justify-content: space-around; padding: 0 2px; }
    .c6 { padding: 0 4px; gap: 6px; }
    .task { height: 60px; background: #3d2019; display: flex; flex: none; color: #fff; }
    .ti { width: 75px; display: flex; justify-content: center; }
    .ti span { width: 61px; height: 60px; display: flex; align-items: center; justify-content: center; border-bottom: 3px solid transparent; padding-top: 3px; }
    .ti.run span { border-color: #ffb9ae; }
    .ti.cur span { background: #852e20; width: 73px; }
    .ti svg { width: 37px; height: 37px; }
    .off { font: 700 16px "Open Sans", sans-serif; fill: #fff; text-anchor: middle; }
    .tray { margin-left: 623px; display: flex; align-items: center; }
    .vol { margin-left: 15px; }
    .clock { width: 112px; text-align: center; font-size: 18.500px; line-height: 28px; letter-spacing: -.35px; margin: 0 14px 0 2px; padding-top: 1px; }
    .peek { width: 1px; height: 60px; background: #8a7069; margin-left: 30px; }
  `;

  private tool(x: Tool) {
    const m = `margin-left:${x.gap}px`;
    if (x.k === "sep") return html`<div class="sep" style=${m}></div>`;
    if (x.k === "caret") return html`<div class="caret ${x.off ? "off" : ""}" style=${m}><i></i></div>`;
    if (x.k === "combo") return html`<div class="combo" style=${m}><i></i></div>`;
    const s = html`<svg width="24" height="24" viewBox="0 0 24 24">${toolIcons[x.k]}</svg>`;
    return html`<div class="tool ${x.k === "label" || x.k === "pin" ? "act" : ""}" style=${m}>${s}</div>`;
  }

  private mark(k: string, n: string) {
    return html`<div class="mk"><svg viewBox="0 0 24 24">${markIcons[k]}</svg>${n}</div>`;
  }
  private markRow(k: string, n: string, g: boolean) {
    return html`<div class="mrow"><svg viewBox="0 0 24 24">${markIcons[k]}</svg><div class="pill ${g ? "g" : ""}">${n}</div></div>`;
  }

  render() {
    const menu = ["File", "Data", "Worksheet", "Dashboard", "Story", "Analysis", "Map", "Format", "Server", "Window", "Help"];
    return html`
      <div class="title seg">
        <div class="ico"><svg width="21" height="21" viewBox="0 0 24 24">${blueSpark}</svg></div>
        <div class="name">Tableau - Final Project Collisions</div>
        <div class="btns">
          <svg width="16" height="17" stroke="#fff"><path d="M0 8.500h15" stroke-width="1.200"/></svg>
          <svg width="16" height="17" stroke="#fff" stroke-width="1.200"><path d="M.5 4.500h11.500v11H.5zM3.500 4V1.500H15v11h-2.500"/></svg>
          <svg width="16" height="17" stroke="#fff" stroke-width="1.200"><path d="m.5 1.500 15 14.500m0-14.500L.5 16"/></svg>
        </div>
      </div>
      <div class="menu seg">${menu.map((m) => html`<span>${m}</span>`)}</div>
      <div class="tools">
        ${tools.map((x) => this.tool(x))}
        <div class="show"><svg width="14" height="16"><path fill="#86719d" d="M0 0h11v3H0z"/><path fill="#7fa3cb" d="M0 4h14v3H0z"/><path fill="#f3a67c" d="M0 8h5v3H0z"/><path fill="#f96f80" d="M0 12h8v3H0z"/></svg>Show Me</div>
      </div>
      <div class="main">
        <div class="left">
          <div class="ltabs"><b>Data</b><div class="an">Analytics<svg width="6" height="8"><path fill="#666" d="M3 0 6 3H0zM3 8 0 5h6z"/></svg></div></div>
          <div class="ds"><svg width="14" height="16" stroke="#777" stroke-width="1.200"><ellipse cx="5.500" cy="2.500" rx="4.500" ry="2"/><path d="M1 2.500v9.500c0 1 1.500 1.800 4 1.800M10 2.500v5"/><circle cx="10" cy="11.500" r="3.800" fill="#2f7fa3" stroke="none"/><path d="m8.200 11.500 1.300 1.300 2.300-2.500" stroke="#fff"/></svg><span>Motor_Vehicle_Collisions_...</span></div>
          <div class="find">
            <div class="box">Search<svg width="11" height="11" stroke="#555" stroke-width="1.300"><circle cx="6.500" cy="4" r="3.300"/><path d="m4 6.500-3.500 4"/></svg></div>
            <svg width="14" height="14" stroke="#555" stroke-width="1.200"><path d="M.7 1.500h12.600L8.500 7v5.500h-3V7z"/></svg>
            <div class="sep fs"></div>
            <svg class="vw" width="13" height="12" stroke="#555" stroke-width="1"><path d="M0 .5h13M0 3h13M0 5.500h13M0 8h13M0 10.500h13" stroke-dasharray="2.500 1"/></svg>
            <div class="caret lc"><i></i></div>
          </div>
          <div class="tb">Tables</div>
          <div class="list">
            <div class="rows">${fields.map(([k, n]) => html`<div class="row"><span class="fi">${k === "abc" ? html`<span class="abc">Abc</span>` : html`<svg viewBox="0 0 16 16">${fieldIcons[k]}</svg>`}</span><span>${n}</span></div>`)}</div>
            <div class="sb"><div><svg width="12" height="9" stroke="#555" stroke-width="2.500"><path d="m1 8 5-5.500L11 8"/></svg></div><div class="th"></div><div class="sp"></div><div><svg width="12" height="9" stroke="#555" stroke-width="2.500"><path d="m1 1 5 5.500L11 1"/></svg></div></div>
          </div>
        </div>
        <div class="mid">
          <div class="card pages"><h4>Pages</h4></div>
          <div class="card filters"><h4>Filters</h4><div class="pill">Zip Code</div><div class="pill">Borough</div></div>
          <div class="card marks"><h4>Marks</h4>
            <div class="sel"><svg width="14" height="10" fill="#555"><path d="M0 1.500 2 .5l3 .5-1 2.500-.5 1L5 6 4 9 3 6.500 1.500 3.500zM7 1.500 9.500.5 14 1l-.5 3-1.500 2-1.500-1L9.500 8 8 7.500 7.500 5 6.500 4z"/></svg><span class="m">Map</span><span class="c"><i class="dn"></i></span></div>
            <div class="grid">${this.mark("color", "Color")}${this.mark("size", "Size")}${this.mark("label", "Label")}${this.mark("detail", "Detail")}${this.mark("tip", "Tooltip")}</div>
            ${this.markRow("color", "Borough (Geog..", false)}${this.markRow("size", "AVG(Number ..", true)}${this.markRow("label", "AVG(Number ..", true)}${this.markRow("label", "Borough", false)}
          </div>
        </div>
        <div class="right">
          <div class="card shelf"><div class="n"><svg width="12" height="12" stroke="#555" stroke-width="2"><path d="M2 0v2M6 0v2M10 0v2M2 3v9M6 3v9M10 3v9"/></svg>Columns</div><div class="pill g">Longitude (generated)</div></div>
          <div class="card shelf"><div class="n"><svg width="12" height="12" stroke="#555" stroke-width="2"><path d="M0 2h2M0 6h2M0 10h2M3 2h9M3 6h9M3 10h9"/></svg>Rows</div><div class="pill g">Latitude (generated)</div></div>
          <div class="lower">
            <div class="viz"><h1>Percentage of Population Injured by Vehicle Collisions in NYC (On Average)</h1>
              <div class="map"><borough-map></borough-map><div class="cr">© 2020 Mapbox © OpenStreetMap</div></div></div>
            <div class="leg"><h5>Borough (Geographic)</h5>${legend.map(([n, c]) => html`<div><i style="background:${c}"></i>${n}</div>`)}</div>
          </div>
        </div>
      </div>
      <div class="tabs">
        <div class="tab w0"><svg width="10" height="13" stroke="#666" stroke-width="1.200"><ellipse cx="5" cy="3" rx="3.800" ry="2"/><path d="M1.200 3v6.500c0 2.600 7.600 2.600 7.600 0V3"/></svg>Data Source</div>
        ${sheets.map((s) => html`<div class="tab ${s.cls}">${s.icon ? html`<svg width="12" height="12" stroke="#666" stroke-width="1.200"><path d="M1 1h10v10H1zM6 1v10M1 6h10"/></svg>` : ""}${s.n}</div>`)}
        <div class="new"><svg viewBox="0 0 17 17"><path d="M9 12.500H2.500v-11h10V8M5 9.500v-2M7.500 9.500v-5M10 7V6"/><path d="M13 9.500v7M9.500 13h7" stroke-width="2"/></svg></div>
        <div class="new"><svg viewBox="0 0 17 17"><path d="M9 12.500H2.500v-11h11V8M8 1.500v10M2.500 7h10"/><path d="M13.500 9.500v7M10 13h7" stroke-width="2"/></svg></div>
        <div class="new"><svg viewBox="0 0 17 17"><path d="M9 12.500 7 11.500 2.500 13V2l4 1.500L8 5l1.500-1.500L13.500 2v6"/><path d="M13 9.500v7M9.500 13h7" stroke-width="2"/></svg></div>
      </div>
      <div class="status">
        <div class="s1">5 marks</div><div class="s2">1 row by 1 column</div><div class="s3">SUM of AVG(Number Of Persons Injured): 127.36%</div>
        <div class="c c1"></div><div class="c c2"></div><div class="c c3"></div><div class="c c4"></div>
        <div class="c c5"><svg width="7" height="8" fill="#555"><path d="M0 0h1.500v8H0zM6.500 0v8L2 4z"/></svg><svg width="5" height="8" fill="#555"><path d="M5 0v8L0 4z"/></svg><svg width="5" height="8" fill="#555"><path d="M0 0v8l5-4z"/></svg><svg width="7" height="8" fill="#555"><path d="M5.500 0H7v8H5.500zM.5 0v8L5 4z"/></svg></div>
        <div class="c c6"><svg width="12" height="11" fill="#b9b9b9"><path d="M0 0h3v3H0zM4.500 0h3v3h-3zM9 0h3v3H9zM0 4h3v3H0zM4.500 4h3v3h-3zM9 4h3v3H9zM0 8h3v3H0zM4.500 8h3v3h-3zM9 8h3v3H9z"/></svg><svg width="12" height="11" fill="#b9b9b9"><path d="M0 0h12v7H0zM0 8h3v3H0zM4.500 8h3v3h-3zM9 8h3v3H9z"/></svg><svg width="12" height="11" fill="#666"><path d="M0 0h12v11H0z"/></svg></div>
      </div>
      <div class="task">
        ${taskIcons.map((ic, i) => html`<div class="ti ${i === 2 || i === 7 ? "run" : ""} ${i === 13 ? "run cur" : ""}"><span><svg viewBox="0 0 40 40">${ic}</svg></span></div>`)}
        <div class="tray">
          <svg width="18" height="11" stroke="#fff" stroke-width="1.300"><path d="m1 10 8-8.500L17 10"/></svg>
          <svg class="vol" width="24" height="20" stroke="#fff" stroke-width="1.200"><path d="M1 7h4l5-5v16l-5-5H1zM13 7q2 3 0 6M16 4.500q4 5.500 0 11M19 2q6 8 0 16"/></svg>
          <div class="clock seg">9:45 AM<br/>12/18/2020</div>
          <svg width="25" height="24" stroke="#fff" stroke-width="1.300"><path d="M1 1h23v17.500h-7.500L12.500 23l-4-4.500H1z"/></svg>
        </div>
        <div class="peek"></div>
      </div>`;
  }
}
